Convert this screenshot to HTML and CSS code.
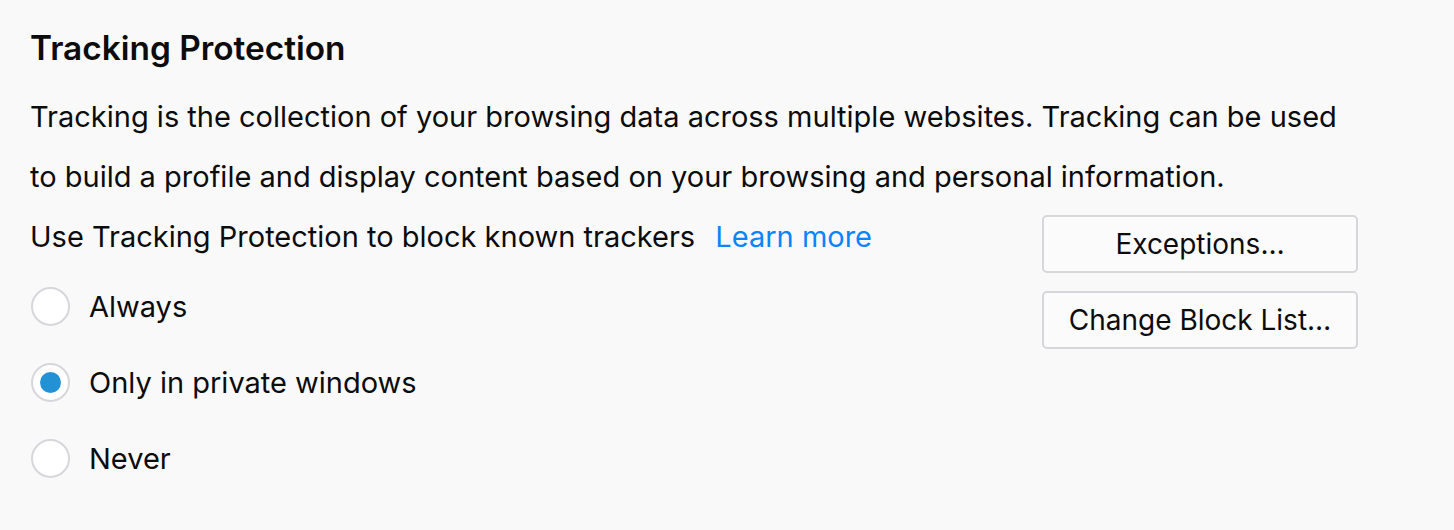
FILE: index.html
```html
<!DOCTYPE html>
<html lang="en">
<head>
<meta charset="utf-8">
<title>Tracking Protection</title>
<link rel="stylesheet" href="styles.css">
</head>
<body>
<section class="section">
  <h2 class="title">Tracking Protection</h2>
  <p class="desc">Tracking is the collection of your browsing data across multiple websites. Tracking can be used to build a profile and display content based on your browsing and personal information.</p>
  <div class="row">
    <div class="left">
      <div class="label">Use Tracking Protection to block known trackers <a class="link" href="#">Learn more</a></div>
      <div class="radios">
        <label class="radio"><span class="circle"></span><span>Always</span></label>
        <label class="radio"><span class="circle checked"></span><span>Only in private windows</span></label>
        <label class="radio"><span class="circle"></span><span>Never</span></label>
      </div>
    </div>
    <div class="buttons">
      <button class="btn">Exceptions…</button>
      <button class="btn">Change Block List…</button>
    </div>
  </div>
</section>
</body>
</html>
```
FILE: styles.css
```css
html, body {
  margin: 0;
  padding: 0;
  background: #f9f9fa;
}
body {
  font-family: "Inter", "Liberation Sans", sans-serif;
  color: #0c0c0d;
  font-size: 29px;
}
.section {
  width: 1328px;
  padding: 28px 0 0 30px;
}
.title {
  margin: 0;
  font-size: 33.4px;
  font-weight: 600;
  line-height: 40px;
}
.desc {
  margin: 19px 0 0;
  line-height: 60px;
}
.row {
  display: flex;
  justify-content: space-between;
  align-items: flex-start;
}
.label {
  line-height: 60px;
}
.link {
  color: #0a84ff;
  text-decoration: none;
  margin-left: 12px;
}
.radios {
  display: flex;
  flex-direction: column;
  padding-top: 1px;
}
.radio {
  display: flex;
  align-items: center;
  height: 76px;
}
.circle {
  box-sizing: border-box;
  width: 39px;
  height: 39px;
  border: 2px solid #d7d7db;
  border-radius: 50%;
  background: #fff;
  margin: 0 19px 0 1px;
  display: flex;
  align-items: center;
  justify-content: center;
}
.circle.checked::after {
  content: "";
  width: 21px;
  height: 21px;
  border-radius: 50%;
  background: #2292d4;
}
.buttons {
  display: flex;
  flex-direction: column;
  gap: 18px;
  padding-top: 8px;
}
.btn {
  box-sizing: border-box;
  width: 316px;
  height: 58px;
  border: 2px solid #d7d7db;
  border-radius: 5px;
  background: #fbfbfb;
  font-family: inherit;
  font-size: 28px;
  color: #0c0c0d;
  padding: 0;
}
```
